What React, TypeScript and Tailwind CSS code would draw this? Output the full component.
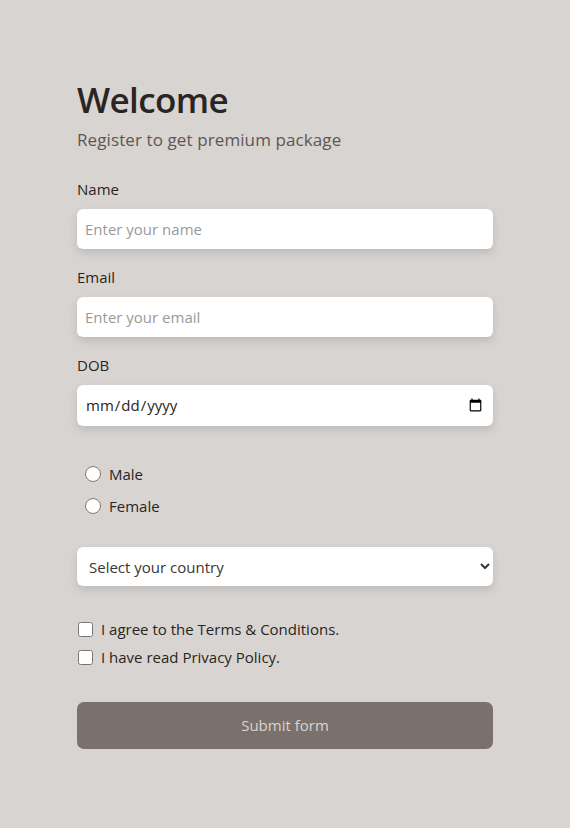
import React from "react";

export default function App() {
  const font = { fontFamily: '"Open Sans", "Noto Sans", sans-serif' };
  return (
    <div className="min-h-[828px] w-full bg-[#d8d4d1] text-[#2a2523]" style={font}>
      <form className="mx-auto flex w-[416px] flex-col pt-[76px]" onSubmit={(e) => e.preventDefault()}>
        <h1 className="text-[35px] font-semibold leading-[48px] tracking-[-0.6px] text-[#2a2523]">Welcome</h1>
        <p className="mt-[4px] text-[17px] leading-[24px] tracking-[0.1px] text-[#5d5754]">Register to get premium package</p>

        <label className="mt-[26px] text-[15px] leading-[22px]">Name</label>
        <input
          type="text"
          placeholder="Enter your name"
          className="mt-[9px] h-[40px] rounded-[6px] bg-white px-[8px] text-[15px] shadow-[0_4px_8px_rgba(0,0,0,0.12)] outline-none placeholder:text-[#9a9a9a]"
        />

        <label className="mt-[17px] text-[15px] leading-[22px]">Email</label>
        <input
          type="email"
          placeholder="Enter your email"
          className="mt-[9px] h-[40px] rounded-[6px] bg-white px-[8px] text-[15px] shadow-[0_4px_8px_rgba(0,0,0,0.12)] outline-none placeholder:text-[#9a9a9a]"
        />

        <label className="mt-[17px] text-[15px] leading-[22px]">DOB</label>
        <input
          type="date"
          className="mt-[9px] h-[41px] rounded-[6px] bg-white px-[8px] text-[15px] text-[#2a2523] shadow-[0_4px_8px_rgba(0,0,0,0.12)] outline-none"
        />

        <div className="mt-[37px] flex flex-col gap-[10px] pl-[8px]">
          <label className="flex items-center gap-[8px] text-[15px] leading-[22px]">
            <input type="radio" name="gender" className="m-0 h-[16px] w-[16px]" />
            Male
          </label>
          <label className="flex items-center gap-[8px] text-[15px] leading-[22px]">
            <input type="radio" name="gender" className="m-0 h-[16px] w-[16px]" />
            Female
          </label>
        </div>

        <select
          defaultValue=""
          className="mt-[30px] h-[39px] rounded-[6px] bg-white px-[8px] text-[15px] text-[#3a3533] shadow-[0_4px_8px_rgba(0,0,0,0.12)] outline-none"
        >
          <option value="" disabled>
            Select your country
          </option>
          <option>India</option>
          <option>USA</option>
        </select>

        <div className="mt-[32px] flex flex-col gap-[6px]">
          <label className="flex items-center gap-[8px] text-[15px] leading-[22px]">
            <input type="checkbox" className="m-0 ml-[1px] h-[15px] w-[15px]" />
            I agree to the Terms &amp; Conditions.
          </label>
          <label className="flex items-center gap-[8px] text-[15px] leading-[22px]">
            <input type="checkbox" className="m-0 ml-[1px] h-[15px] w-[15px]" />
            I have read Privacy Policy.
          </label>
        </div>

        <button
          type="submit"
          className="mt-[34px] h-[47px] rounded-[7px] bg-[#7a716d] text-[15px] text-[#d9d4d1]"
        >
          Submit form
        </button>
      </form>
    </div>
  );
}
